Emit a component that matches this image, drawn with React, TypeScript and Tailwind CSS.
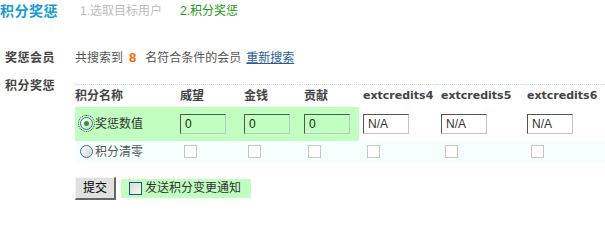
import React from 'react';

const cjk = "font-['Liberation_Sans','Noto_Sans_CJK_SC',sans-serif]";
const head = "font-['DejaVu_Sans','Noto_Sans_CJK_SC',sans-serif] font-bold text-[#444]";

function Radio({ checked }: { checked?: boolean }) {
  return (
    <span
      className={`inline-flex items-center justify-center w-[15px] h-[15px] shrink-0 ${
        checked ? 'outline outline-1 outline-dotted outline-[#333] rounded-full' : ''
      }`}
    >
      <span className="flex items-center justify-center w-[13px] h-[13px] rounded-full border border-[#3b6ea5] bg-gradient-to-br from-white to-[#d4d4cc]">
        {checked && <span className="w-[5px] h-[5px] rounded-full bg-[#21a121]" />}
      </span>
    </span>
  );
}

function Box({ green }: { green?: boolean }) {
  return (
    <span
      className={`inline-block w-[13px] h-[13px] shrink-0 ${
        green
          ? 'border border-[#1c5180] bg-gradient-to-br from-[#dcdcd4] to-[#f8f8f4]'
          : 'border border-[#c8c8b4] bg-white'
      }`}
    />
  );
}

function Field({ value, green }: { value: string; green?: boolean }) {
  return (
    <div
      className={`w-[46px] h-[20px] flex items-center pl-[4px] text-[12px] border-t border-l border-t-[#4b5a4b] border-l-[#4b5a4b] border-b border-r border-b-[#c4c4bc] border-r-[#c4c4bc] ${
        green ? 'bg-[#c0ffc0] text-[#053205]' : 'bg-white text-[#333]'
      }`}
    >
      {value}
    </div>
  );
}

export default function App() {
  const cols = ['威望', '金钱', '贡献'];
  const exts = ['extcredits4', 'extcredits5', 'extcredits6'];

  return (
    <div className={`w-[605px] h-[212px] bg-white overflow-hidden ${cjk}`}>
      {/* 标题 */}
      <div className="flex items-center h-[22px]">
        <span className="w-[80px] text-[14px] font-bold text-[#1a9ad6] tracking-[0.5px]">积分奖惩</span>
        <span className="w-[100px] text-[12px] text-[#bbb]">1.选取目标用户</span>
        <span className="text-[12px] text-[#1a9a1a]">2.积分奖惩</span>
      </div>

      {/* 奖惩会员 */}
      <div className="flex items-center h-[24px] mt-[24px] text-[12px]">
        <span className={`w-[75px] pl-[5px] ${head} tracking-[0.5px]`}>奖惩会员</span>
        <span className="text-[#555]">共搜索到</span>
        <span className="mx-[6px] font-bold text-[#f60] text-[13px]">8</span>
        <span className="text-[#555] ml-[3px]">名符合条件的会员</span>
        <a className="ml-[5px] text-[#2b5b9a] underline">重新搜索</a>
      </div>

      {/* 积分奖惩 */}
      <div className="flex mt-[8px]">
        <div className={`w-[75px] pl-[5px] text-[12px] leading-[14px] pt-[1px] ${head} tracking-[0.5px]`}>积分奖惩</div>
        <div className="w-[530px] mt-[6px]">
          <table className="border-collapse table-fixed w-[530px] text-[12px]">
            <colgroup>
              <col className="w-[101px]" />
              <col className="w-[64px]" />
              <col className="w-[60px]" />
              <col className="w-[59px]" />
              <col className="w-[78px]" />
              <col className="w-[86px]" />
              <col className="w-[82px]" />
            </colgroup>
            <thead>
              <tr className="h-[22px] border-t border-dotted border-[#c9dbe6]">
                <th className={`text-left p-0 ${head} text-[12px]`}>积分名称</th>
                {cols.map(c => (
                  <th key={c} className={`text-left p-0 pl-[4px] ${head} text-[12px]`}>{c}</th>
                ))}
                {exts.map(c => (
                  <th key={c} className={`text-left p-0 pl-[4px] ${head} text-[11px] font-bold`}>{c}</th>
                ))}
              </tr>
            </thead>
            <tbody>
              <tr className="h-[34px]">
                <td className="p-0 pl-[4px] bg-[#c0ffc0]">
                  <div className="flex items-center gap-[1px] text-[#333]">
                    <Radio checked />
                    <span>奖惩数值</span>
                  </div>
                </td>
                {cols.map(c => (
                  <td key={c} className="p-0 pl-[4px] bg-[#c0ffc0]">
                    <Field value="0" green />
                  </td>
                ))}
                {exts.map(c => (
                  <td key={c} className="p-0 pl-[4px]">
                    <Field value="N/A" />
                  </td>
                ))}
              </tr>
              <tr className="h-[22px] bg-[#f5ffff]">
                <td className="p-0 pl-[4px]">
                  <div className="flex items-center gap-[1px] text-[#555]">
                    <Radio />
                    <span>积分清零</span>
                  </div>
                </td>
                {[...cols, ...exts].map(c => (
                  <td key={c} className="p-0 pl-[8px]">
                    <div className="flex items-center">
                      <Box />
                    </div>
                  </td>
                ))}
              </tr>
            </tbody>
          </table>
        </div>
      </div>

      {/* 提交 */}
      <div className="flex items-center mt-[14px] pl-[75px]">
        <button className="w-[41px] h-[23px] text-[12px] text-black bg-[#e0e0e0] border-t border-l border-t-[#f4f4f4] border-l-[#f4f4f4] border-b-2 border-r-2 border-b-[#666] border-r-[#666]">
          提交
        </button>
        <label className="ml-[5px] w-[130px] h-[19px] flex items-center pl-[8px] gap-[3px] bg-[#c0ffc0] text-[12px] text-[#333]">
          <Box green />
          <span>发送积分变更通知</span>
        </label>
      </div>
    </div>
  );
}
